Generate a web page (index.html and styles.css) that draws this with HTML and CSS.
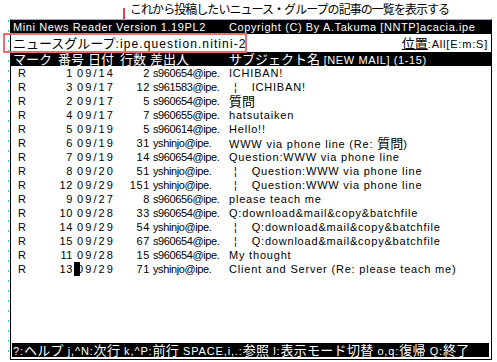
FILE: index.html
```html
<!DOCTYPE html>
<html lang="ja">
<head>
  <meta charset="UTF-8">
  <meta name="viewport" content="width=device-width, initial-scale=1.0">
  <title>Mini News Reader</title>
  <link rel="stylesheet" href="styles.css">
</head>
<body>
  <div class="note">これから投稿したいニュース・グループの記事の一覧を表示する</div>
  <svg class="arrow" width="12" height="22" viewBox="0 0 12 22">
    <line x1="6" y1="0" x2="6" y2="13" stroke="#ee3b55" stroke-width="2"/>
    <polygon points="1.5,12 10.5,12 6,21" fill="#ee3b55"/>
  </svg>

  <div class="term">
    <div class="titlebar">
      <span class="t-name">Mini News Reader Version 1.19PL2</span>
      <span>Copyright (C) By A.Takuma [NNTP]acacia.ipe</span>
    </div>

    <div class="group">
      <span><span class="ja">ニュースグループ</span>:ipe.question.nitini-2</span>
      <span class="pos"><span class="ja under">位置</span>:All[E:m:S]</span>
    </div>

    <div class="head">
      <span class="ja">マーク</span>
      <span class="ja">番号</span>
      <span class="ja">日付</span>
      <span class="ja">行数</span>
      <span class="ja">差出人</span>
      <span><span class="ja">サブジェクト名</span> [NEW MAIL] (1-15)</span>
    </div>

    <div class="list">
      <div class="row"><span>R</span><span class="n">1</span><span class="d">09/14</span><span class="n">2</span><span class="from">s960654@ipe.</span><span class="subj">ICHIBAN!</span></div>
      <div class="row"><span>R</span><span class="n">3</span><span class="d">09/17</span><span class="n">12</span><span class="from">s961583@ipe.</span><span class="subj"><span class="bar">¦</span>ICHIBAN!</span></div>
      <div class="row"><span>R</span><span class="n">2</span><span class="d">09/17</span><span class="n">5</span><span class="from">s960654@ipe.</span><span class="subj ja">質問</span></div>
      <div class="row"><span>R</span><span class="n">4</span><span class="d">09/17</span><span class="n">7</span><span class="from">s960655@ipe.</span><span class="subj">hatsutaiken</span></div>
      <div class="row"><span>R</span><span class="n">5</span><span class="d">09/19</span><span class="n">5</span><span class="from">s960614@ipe.</span><span class="subj">Hello!!</span></div>
      <div class="row"><span>R</span><span class="n">6</span><span class="d">09/19</span><span class="n">31</span><span class="from">yshinjo@ipe.</span><span class="subj">WWW via phone line (Re: <span class="ja">質問</span>)</span></div>
      <div class="row"><span>R</span><span class="n">7</span><span class="d">09/19</span><span class="n">14</span><span class="from">s960654@ipe.</span><span class="subj">Question:WWW via phone line</span></div>
      <div class="row"><span>R</span><span class="n">8</span><span class="d">09/20</span><span class="n">51</span><span class="from">yshinjo@ipe.</span><span class="subj"><span class="bar">¦</span>Question:WWW via phone line</span></div>
      <div class="row"><span>R</span><span class="n">12</span><span class="d">09/29</span><span class="n">151</span><span class="from">yshinjo@ipe.</span><span class="subj"><span class="bar">¦</span>Question:WWW via phone line</span></div>
      <div class="row"><span>R</span><span class="n">9</span><span class="d">09/27</span><span class="n">8</span><span class="from">s960656@ipe.</span><span class="subj">please teach me</span></div>
      <div class="row"><span>R</span><span class="n">10</span><span class="d">09/28</span><span class="n">33</span><span class="from">s960654@ipe.</span><span class="subj">Q:download&amp;mail&amp;copy&amp;batchfile</span></div>
      <div class="row"><span>R</span><span class="n">14</span><span class="d">09/29</span><span class="n">54</span><span class="from">yshinjo@ipe.</span><span class="subj"><span class="bar">¦</span>Q:download&amp;mail&amp;copy&amp;batchfile</span></div>
      <div class="row"><span>R</span><span class="n">15</span><span class="d">09/29</span><span class="n">67</span><span class="from">s960654@ipe.</span><span class="subj"><span class="bar">¦</span>Q:download&amp;mail&amp;copy&amp;batchfile</span></div>
      <div class="row"><span>R</span><span class="n">11</span><span class="d">09/28</span><span class="n">15</span><span class="from">s960654@ipe.</span><span class="subj">My thought</span></div>
      <div class="row"><span>R</span><span class="n">13</span><span class="d cursor">09/29</span><span class="n">71</span><span class="from">yshinjo@ipe.</span><span class="subj">Client and Server (Re: please teach me)</span></div>
    </div>

    <div class="status">?:<span class="ja">ヘルプ</span> j,^N:<span class="ja">次行</span> k,^P:<span class="ja">前行</span> SPACE,i,.:<span class="ja">参照</span> l:<span class="ja">表示モード切替</span> o,q:<span class="ja">復帰</span> Q:<span class="ja">終了</span></div>
  </div>

  <div class="mark-box"></div>
</body>
</html>
```

FILE: styles.css
```css
body {
  font-family: "Liberation Sans", "Noto Sans CJK JP", sans-serif;
  font-size: 11px;
  color: #000;
  background: #fff;
  margin: 0;
  position: relative;
  width: 497px;
  height: 362px;
  overflow: hidden;
}

.note {
  height: 19px;
  padding-left: 130px;
  font-family: "Noto Sans CJK JP", sans-serif;
  font-size: 12px;
  letter-spacing: -0.95px;
  line-height: 18px;
  white-space: nowrap;
}

.arrow {
  position: absolute;
  left: 118px;
  top: 8px;
}

.mark-box {
  position: absolute;
  left: 3px;
  top: 33px;
  width: 244px;
  height: 20px;
  box-sizing: border-box;
  border: 2px solid #f06b6e;
}

.term {
  position: relative;
  margin-left: 10px;
  width: 482px;
  height: 341px;
  box-sizing: border-box;
  border: 1px solid #000;
  border-top-color: #aaa4d8;
  display: flex;
  flex-direction: column;
  letter-spacing: 0.6px;
}

/* cyan tick marks along the left edge */
.term::before {
  content: "";
  position: absolute;
  left: -3px;
  top: 0;
  bottom: 0;
  width: 1px;
  background: repeating-linear-gradient(to bottom, #22d4e4 0 2px, transparent 2px 10px);
}

.ja {
  font-family: "Noto Sans CJK JP", sans-serif;
  font-size: 13px;
  letter-spacing: 0;
}

.titlebar {
  background: #000;
  color: #fff;
  height: 14px;
  line-height: 14px;
  padding-left: 2px;
  display: flex;
  white-space: nowrap;
}

.t-name {
  width: 216px;
}

.group {
  height: 18px;
  line-height: 18px;
  display: flex;
  justify-content: space-between;
  padding: 0 3px 0 2px;
  font-size: 12px;
  letter-spacing: 1.1px;
  white-space: nowrap;
}

.pos {
  font-size: 11px;
  letter-spacing: 0.8px;
}

.under {
  text-decoration: underline;
}

.head {
  background: #000;
  color: #fff;
  height: 14px;
  line-height: 14px;
  display: grid;
  grid-template-columns: 45px 30px 32px 30px 79px auto;
  padding-left: 2px;
  white-space: nowrap;
}

.list {
  flex: 1;
}

.row {
  display: grid;
  grid-template-columns: 30px 25px 41px 36px 79px auto;
  height: 14px;
  line-height: 14px;
  padding-left: 7px;
  white-space: nowrap;
}

.row .n {
  text-align: right;
}

.row .d {
  padding-left: 4px;
  letter-spacing: 2.1px;
  position: relative;
}

.row .from {
  padding-left: 3px;
  letter-spacing: -0.4px;
}

.row .subj {
  letter-spacing: 0.8px;
}

.row .subj.ja {
  letter-spacing: 0;
}

.bar {
  margin: 0 14px 0 5px;
}

.cursor::before {
  content: "";
  position: absolute;
  left: 1px;
  top: 0;
  width: 6px;
  height: 14px;
  background: #000;
}

.status {
  background: #000;
  color: #fff;
  height: 14px;
  line-height: 14px;
  margin: 0 2px 2px 1px;
  padding-left: 1px;
  letter-spacing: 0.85px;
  white-space: nowrap;
}

.status .ja {
  letter-spacing: 0.3px;
}
```
